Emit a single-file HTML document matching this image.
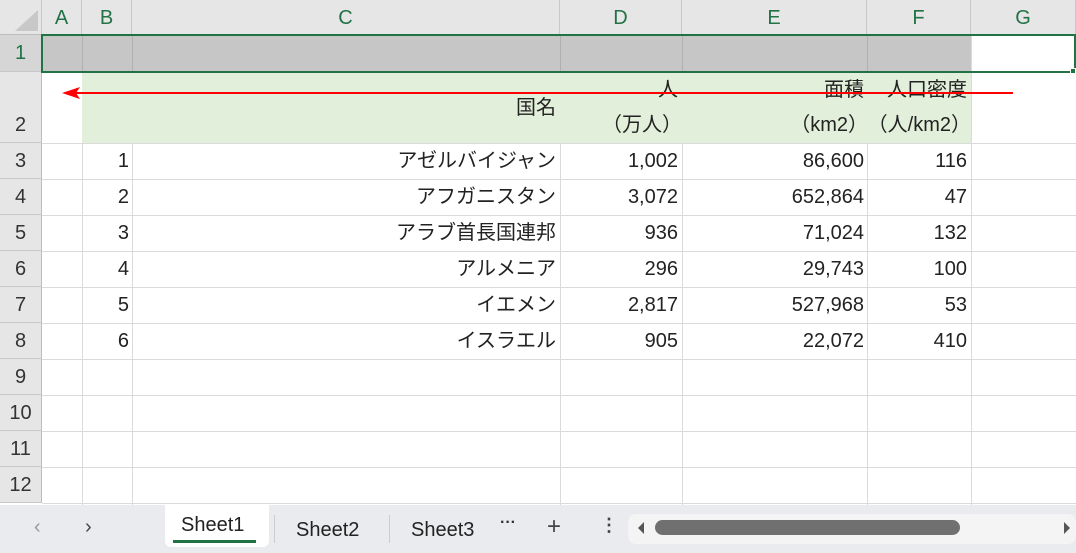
<!DOCTYPE html><html><head><meta charset="utf-8"><style>
*{margin:0;padding:0;box-sizing:border-box}
body{width:1076px;height:553px;overflow:hidden;background:#fff;font-family:"Liberation Sans","Noto Sans CJK JP",sans-serif;position:relative}
.a{position:absolute}
.ch{position:absolute;top:0;height:35px;background:#e6e6e6;border-right:1px solid #c8c8c8;border-bottom:1px solid #bdbdbd;color:#217346;font-size:20px;text-align:center;line-height:36px}
.rh{position:absolute;left:0;width:42px;background:#e6e6e6;border-right:1px solid #bdbdbd;border-bottom:1px solid #c8c8c8;color:#333;font-size:20px;text-align:center}
.vl{position:absolute;top:35px;height:470px;width:1px;background:#dadada}
.hl{position:absolute;left:42px;width:1034px;height:1px;background:#dadada}
.c{position:absolute;font-size:20px;color:#222;text-align:right;height:36px;line-height:36px}
</style></head><body>
<div class="ch" style="left:0;width:42px"><svg width="42" height="35"><polygon points="38,10 38,31 15,31" fill="#c8c8c8"/></svg></div>
<div class="ch" style="left:42px;width:40px">A</div>
<div class="ch" style="left:82px;width:50px">B</div>
<div class="ch" style="left:132px;width:428px">C</div>
<div class="ch" style="left:560px;width:122px">D</div>
<div class="ch" style="left:682px;width:185px">E</div>
<div class="ch" style="left:867px;width:104px">F</div>
<div class="ch" style="left:971px;width:105px">G</div>
<div class="vl" style="left:82px"></div><div class="vl" style="left:132px"></div><div class="vl" style="left:560px"></div><div class="vl" style="left:682px"></div><div class="vl" style="left:867px"></div><div class="vl" style="left:971px"></div>
<div class="a" style="left:42px;top:36px;width:929px;height:36px;background:#c6c6c6"></div>
<div class="a" style="left:82px;top:36px;width:1px;height:36px;background:#b0b0b0"></div>
<div class="a" style="left:132px;top:36px;width:1px;height:36px;background:#b0b0b0"></div>
<div class="a" style="left:560px;top:36px;width:1px;height:36px;background:#b0b0b0"></div>
<div class="a" style="left:682px;top:36px;width:1px;height:36px;background:#b0b0b0"></div>
<div class="a" style="left:867px;top:36px;width:1px;height:36px;background:#b0b0b0"></div>
<div class="a" style="left:82px;top:72px;width:889px;height:71px;background:#e2efda"></div>
<div class="hl" style="top:143px"></div><div class="hl" style="top:179px"></div><div class="hl" style="top:215px"></div><div class="hl" style="top:251px"></div><div class="hl" style="top:287px"></div><div class="hl" style="top:323px"></div><div class="hl" style="top:359px"></div><div class="hl" style="top:395px"></div><div class="hl" style="top:431px"></div><div class="hl" style="top:467px"></div><div class="hl" style="top:503px"></div>
<div class="rh" style="top:35px;height:37px;line-height:37px;color:#217346;background:#d6d6d6">1</div>
<div class="rh" style="top:72px;height:71px;line-height:106px">2</div>
<div class="rh" style="top:143px;height:36px;line-height:36px">3</div>
<div class="rh" style="top:179px;height:36px;line-height:36px">4</div>
<div class="rh" style="top:215px;height:36px;line-height:36px">5</div>
<div class="rh" style="top:251px;height:36px;line-height:36px">6</div>
<div class="rh" style="top:287px;height:36px;line-height:36px">7</div>
<div class="rh" style="top:323px;height:36px;line-height:36px">8</div>
<div class="rh" style="top:359px;height:36px;line-height:36px">9</div>
<div class="rh" style="top:395px;height:36px;line-height:36px">10</div>
<div class="rh" style="top:431px;height:36px;line-height:36px">11</div>
<div class="rh" style="top:467px;height:36px;line-height:36px">12</div>
<div class="a" style="left:41px;top:34px;width:1035px;height:39px;border:2px solid #217346"></div>
<div class="a" style="left:1070px;top:68px;width:6px;height:6px;background:#217346;border:1px solid #fff"></div>
<div class="c" style="left:132px;width:424px;top:90px">国名</div>
<div class="c" style="left:560px;width:118px;top:72px">人</div>
<div class="c" style="left:560px;width:122px;top:107px">（万人）</div>
<div class="c" style="left:682px;width:182px;top:72px">面積</div>
<div class="c" style="left:682px;width:186px;top:107px">（km2）</div>
<div class="c" style="left:860px;width:107px;top:72px">人口密度</div>
<div class="c" style="left:855px;width:116px;top:107px">（人/km2）</div>
<div class="a" style="left:60px;top:86px;width:955px;height:14px"><svg width="955" height="14"><line x1="12" y1="7" x2="953" y2="7" stroke="#f00" stroke-width="2"/><polygon points="2,7 20,1 16,7 20,13" fill="#f00"/></svg></div>
<div class="c" style="left:82px;width:47px;top:143px">1</div><div class="c" style="left:132px;width:424px;top:143px">アゼルバイジャン</div><div class="c" style="left:560px;width:118px;top:143px">1,002</div><div class="c" style="left:682px;width:182px;top:143px">86,600</div><div class="c" style="left:867px;width:100px;top:143px">116</div>
<div class="c" style="left:82px;width:47px;top:179px">2</div><div class="c" style="left:132px;width:424px;top:179px">アフガニスタン</div><div class="c" style="left:560px;width:118px;top:179px">3,072</div><div class="c" style="left:682px;width:182px;top:179px">652,864</div><div class="c" style="left:867px;width:100px;top:179px">47</div>
<div class="c" style="left:82px;width:47px;top:215px">3</div><div class="c" style="left:132px;width:424px;top:215px">アラブ首長国連邦</div><div class="c" style="left:560px;width:118px;top:215px">936</div><div class="c" style="left:682px;width:182px;top:215px">71,024</div><div class="c" style="left:867px;width:100px;top:215px">132</div>
<div class="c" style="left:82px;width:47px;top:251px">4</div><div class="c" style="left:132px;width:424px;top:251px">アルメニア</div><div class="c" style="left:560px;width:118px;top:251px">296</div><div class="c" style="left:682px;width:182px;top:251px">29,743</div><div class="c" style="left:867px;width:100px;top:251px">100</div>
<div class="c" style="left:82px;width:47px;top:287px">5</div><div class="c" style="left:132px;width:424px;top:287px">イエメン</div><div class="c" style="left:560px;width:118px;top:287px">2,817</div><div class="c" style="left:682px;width:182px;top:287px">527,968</div><div class="c" style="left:867px;width:100px;top:287px">53</div>
<div class="c" style="left:82px;width:47px;top:323px">6</div><div class="c" style="left:132px;width:424px;top:323px">イスラエル</div><div class="c" style="left:560px;width:118px;top:323px">905</div><div class="c" style="left:682px;width:182px;top:323px">22,072</div><div class="c" style="left:867px;width:100px;top:323px">410</div>
<div class="a" style="left:0;top:505px;width:1076px;height:48px;background:#e9ebee"></div>
<div class="a" style="left:34px;top:516px;font-size:20px;color:#999">‹</div>
<div class="a" style="left:85px;top:516px;font-size:20px;color:#444">›</div>
<div class="a" style="left:165px;top:505px;width:104px;height:42px;background:#fff;border-radius:0 0 6px 6px"></div>
<div class="a" style="left:181px;top:514px;font-size:20px;color:#222">Sheet1</div>
<div class="a" style="left:173px;top:540px;width:83px;height:3px;background:#217346"></div>
<div class="a" style="left:274px;top:515px;width:1px;height:28px;background:#ccc"></div>
<div class="a" style="left:296px;top:519px;font-size:20px;color:#222">Sheet2</div>
<div class="a" style="left:389px;top:515px;width:1px;height:28px;background:#ccc"></div>
<div class="a" style="left:411px;top:519px;font-size:20px;color:#222">Sheet3</div>
<div class="a" style="left:500px;top:514px;font-size:16px;color:#333;font-weight:bold">···</div>
<div class="a" style="left:547px;top:513px;font-size:24px;color:#444">+</div>
<div class="a" style="left:600px;top:515px;font-size:18px;color:#444;font-weight:bold">⋮</div>
<div class="a" style="left:628px;top:514px;width:448px;height:30px;background:#f4f4f4;border-radius:8px"></div>
<div class="a" style="left:655px;top:520px;width:305px;height:15px;background:#707070;border-radius:8px"></div>
<svg class="a" style="left:636px;top:520px" width="10" height="16"><polygon points="8,2 8,14 2,8" fill="#555"/></svg>
<svg class="a" style="left:1062px;top:520px" width="10" height="16"><polygon points="2,2 2,14 8,8" fill="#555"/></svg>
</body></html>
